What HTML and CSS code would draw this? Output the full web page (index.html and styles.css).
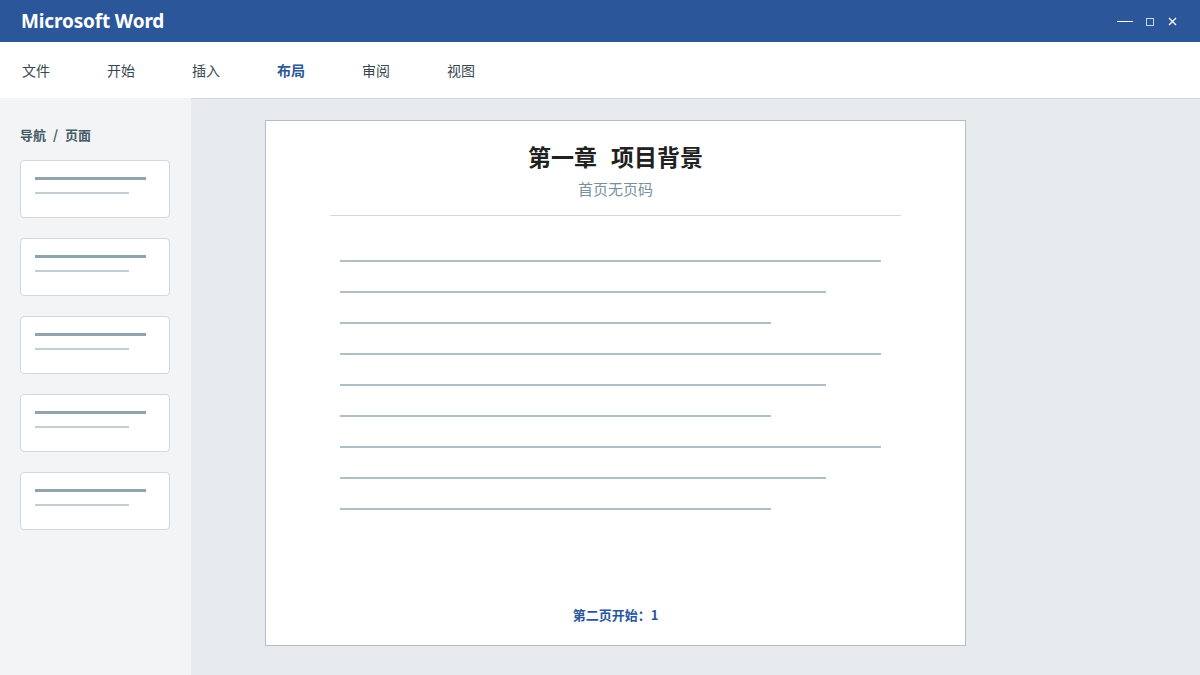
FILE: index.html
```html
<!DOCTYPE html>
<html lang="zh">
<head>
<meta charset="utf-8">
<link rel="stylesheet" href="styles.css">
</head>
<body>
<div class="app">
  <header class="titlebar">
    <div class="app-name">Microsoft Word</div>
    <div class="win-controls">
      <span class="wc wc-min"></span>
      <span class="wc wc-max"></span>
      <span class="wc wc-close">
        <svg width="9" height="9" viewBox="0 0 9 9"><path d="M1 1L8 8M8 1L1 8" stroke="#fff" stroke-width="1.3"/></svg>
      </span>
    </div>
  </header>
  <nav class="ribbon">
    <span class="tab">文件</span>
    <span class="tab">开始</span>
    <span class="tab">插入</span>
    <span class="tab active">布局</span>
    <span class="tab">审阅</span>
    <span class="tab">视图</span>
  </nav>
  <div class="body">
    <aside class="sidebar">
      <div class="side-title">导航 / 页面</div>
      <div class="thumbs">
        <div class="thumb"><span class="t1"></span><span class="t2"></span></div>
        <div class="thumb"><span class="t1"></span><span class="t2"></span></div>
        <div class="thumb"><span class="t1"></span><span class="t2"></span></div>
        <div class="thumb"><span class="t1"></span><span class="t2"></span></div>
        <div class="thumb"><span class="t1"></span><span class="t2"></span></div>
      </div>
    </aside>
    <main class="canvas">
      <div class="page">
        <h1 class="doc-title">第一章 项目背景</h1>
        <div class="doc-sub">首页无页码</div>
        <div class="divider"></div>
        <div class="lines">
          <span class="ln w1"></span>
          <span class="ln w2"></span>
          <span class="ln w3"></span>
          <span class="ln w1"></span>
          <span class="ln w2"></span>
          <span class="ln w3"></span>
          <span class="ln w1"></span>
          <span class="ln w2"></span>
          <span class="ln w3"></span>
        </div>
        <div class="footer">第二页开始：1</div>
      </div>
    </main>
  </div>
</div>
</body>
</html>
```

FILE: styles.css
```css
* { box-sizing: border-box; margin: 0; padding: 0; }
html, body { width: 1200px; height: 675px; overflow: hidden; }
body {
  font-family: "Noto Sans CJK SC", "Noto Sans", sans-serif;
  background: #e8ebee;
}
.app { display: flex; flex-direction: column; height: 675px; }

.titlebar {
  height: 42px;
  background: #2b579a;
  display: flex;
  align-items: center;
  justify-content: space-between;
  padding: 0 23px 0 21px;
  flex: none;
}
.app-name {
  color: #fff;
  font-family: "Noto Sans", "Open Sans", sans-serif;
  font-weight: 700;
  font-size: 19px;
  letter-spacing: -0.15px;
}
.win-controls { display: flex; align-items: center; }
.wc { display: block; }
.wc-min { width: 16px; height: 1.5px; background: #fff; margin-right: 13px; margin-top: 1px; }
.wc-max { width: 8px; height: 8px; border: 1px solid #c9d5ea; margin-right: 14px; margin-top: 2px; }
.wc-close { width: 9px; height: 9px; display: flex; margin-top: 1px; }

.ribbon {
  height: 56px;
  background: #fff;
  display: flex;
  align-items: center;
  padding-left: 22px;
  flex: none;
}
.tab {
  width: 85px;
  font-size: 14px;
  color: #37474f;
  padding-bottom: 1px;
}
.tab.active { color: #2b579a; font-weight: 700; }

.body { flex: 1; display: flex; min-height: 0; }
.sidebar {
  width: 191px;
  background: #f3f4f6;
  padding: 28px 20px 0 20px;
  flex: none;
}
.side-title {
  font-size: 13px;
  font-weight: 700;
  color: #455a64;
  line-height: 18px;
  word-spacing: 4px;
}
.thumbs { display: flex; flex-direction: column; gap: 20px; margin-top: 16px; }
.thumb {
  width: 150px;
  height: 58px;
  background: #fff;
  border: 1px solid #cfd8dc;
  border-radius: 4px;
  padding: 16px 0 0 14px;
  display: flex;
  flex-direction: column;
}
.t1 { display: block; width: 111px; height: 3px; background: #90a4ae; }
.t2 { display: block; width: 94px; height: 2px; background: #c5cfd3; margin-top: 12px; }

.canvas {
  flex: 1;
  background: #e8ebee;
  border-top: 1px solid #cfd8dc;
  padding: 21px 0 0 74px;
}
.page {
  width: 701px;
  height: 526px;
  background: #fff;
  border: 1px solid #b0bec5;
  padding: 19px 64px 0 64px;
  display: flex;
  flex-direction: column;
}
.doc-title {
  text-align: center;
  font-size: 23px;
  font-weight: 700;
  color: #212121;
  line-height: 32px;
  word-spacing: 9px;
}
.doc-sub {
  text-align: center;
  font-size: 15px;
  color: #78909c;
  line-height: 20px;
  margin-top: 7px;
}
.divider { height: 1px; background: #cfd8dc; margin-top: 16px; }
.lines {
  display: flex;
  flex-direction: column;
  gap: 29px;
  padding-left: 10px;
  margin-top: 44px;
}
.ln { display: block; height: 2px; background: #b0bec5; }
.w1 { width: 541px; }
.w2 { width: 486px; }
.w3 { width: 431px; }
.footer {
  margin-top: auto;
  margin-bottom: 21px;
  text-align: center;
  font-size: 13px;
  font-weight: 700;
  color: #2b579a;
  line-height: 18px;
}
```
